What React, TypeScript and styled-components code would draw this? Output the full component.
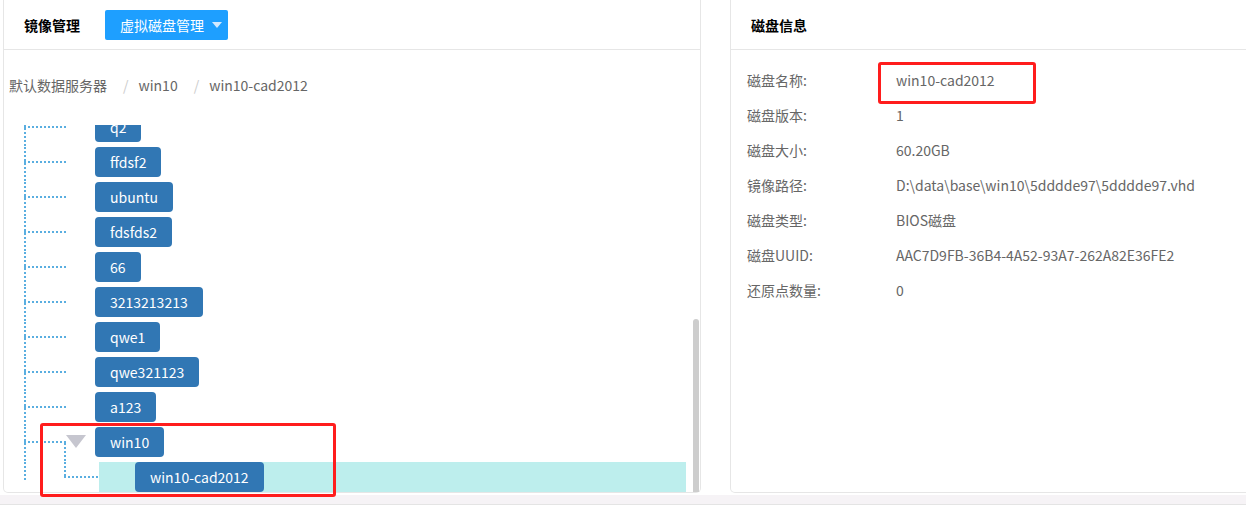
import React from 'react';
import styled, { createGlobalStyle } from 'styled-components';

const GlobalStyle = createGlobalStyle`
  html, body {
    margin: 0;
    padding: 0;
    background: #fff;
    overflow: hidden;
  }
  body {
    font-family: "Microsoft YaHei", "Noto Sans CJK SC", sans-serif;
    font-size: 14px;
    color: #666;
  }
`;

// x, y, w, h of one dotted guide segment inside a connector cell
type Seg = [number, number, number, number];

const DOT = '#5aaee0';
const dots = ([x, y, w, h]: Seg) => {
  const dir = w > h ? 'to right' : 'to bottom';
  return `repeating-linear-gradient(${dir}, ${DOT} 0 2px, transparent 2px 4px) ${x}px ${y}px / ${w}px ${h}px no-repeat`;
};

const Page = styled.div`
  display: flex;
  flex-direction: column;
  width: 1246px;
  height: 517px;
`;

const Panels = styled.div`
  display: flex;
  padding-left: 3px;
  height: 493px;
`;

const Panel = styled.section<{ $width: number }>`
  position: relative;
  flex: none;
  display: flex;
  flex-direction: column;
  width: ${p => p.$width}px;
  height: 100%;
  box-sizing: border-box;
  border: 1px solid #e6e6e6;
  border-top: none;
  border-radius: 0 0 5px 5px;
  background: #fff;

  & + & {
    margin-left: 29px;
  }
`;

const PanelHeader = styled.header`
  flex: none;
  display: flex;
  align-items: center;
  height: 49px;
  padding-left: 20px;
  border-bottom: 1px solid #e6e6e6;
`;

const Title = styled.h2`
  margin: 0;
  font-size: 14px;
  font-weight: 700;
  color: #000;
`;

const DropButton = styled.button`
  display: inline-flex;
  align-items: center;
  gap: 8px;
  height: 30px;
  margin-left: 25px;
  padding: 0 6px 0 15px;
  border: none;
  border-radius: 2px;
  background: #1e9fff;
  color: #fff;
  font: inherit;
  font-size: 14px;
`;

const Caret = styled.i`
  width: 0;
  height: 0;
  border-left: 5.5px solid transparent;
  border-right: 5.5px solid transparent;
  border-top: 6px solid #d2e9ff;
`;

const Breadcrumb = styled.nav`
  flex: none;
  display: flex;
  align-items: center;
  height: 75px;
  padding: 0 0 5px 5px;
  box-sizing: border-box;
  color: #666;
`;

const Crumb = styled.span``;

const Sep = styled.span`
  margin: 0 10px 0 16px;
  color: #ccc;
`;

const TreeArea = styled.div`
  position: relative;
  flex: 1;
  overflow: hidden;
`;

const TreeList = styled.ul`
  list-style: none;
  margin: -13px 0 0;
  padding: 0 0 0 20px;
`;

const Row = styled.li`
  display: flex;
  align-items: flex-start;
  height: 35px;
`;

const Connector = styled.span<{ $w: number; $segs: Seg[] }>`
  flex: none;
  width: ${p => p.$w}px;
  height: 35px;
  background: ${p => p.$segs.map(dots).join(', ')};
`;

const Toggle = styled.span`
  flex: none;
  width: 29px;
  height: 30px;
`;

const Triangle = styled.i`
  display: block;
  width: 0;
  height: 0;
  margin-top: 8px;
  border-left: 10.5px solid transparent;
  border-right: 10.5px solid transparent;
  border-top: 13px solid #c6c6cf;
`;

const NodeBox = styled.span`
  flex: none;
  height: 30px;
  line-height: 30px;
  padding: 0 15px;
  border-radius: 4px;
  background: #3177b4;
  color: #fff;
  white-space: nowrap;
`;

const Selected = styled.div`
  flex: none;
  display: flex;
  width: 587px;
  height: 30px;
  padding-left: 36px;
  box-sizing: border-box;
  background: #bdeeed;
`;

const Thumb = styled.div`
  position: absolute;
  right: 1px;
  top: 194px;
  bottom: 0;
  width: 6px;
  border-radius: 3px 3px 0 0;
  background: #cdcdcd;
`;

const Annotation = styled.span<{ $l: number; $t: number; $w: number; $h: number }>`
  position: absolute;
  left: ${p => p.$l}px;
  top: ${p => p.$t}px;
  width: ${p => p.$w}px;
  height: ${p => p.$h}px;
  box-sizing: border-box;
  border: 3px solid #ff1d1d;
  border-radius: 3px;
  pointer-events: none;
`;

const InfoList = styled.dl`
  margin: 0;
  padding: 12px 0 0 16px;
`;

const InfoRow = styled.div`
  display: grid;
  grid-template-columns: 149px 1fr;
  height: 35px;
`;

const Label = styled.dt`
  display: flex;
  align-items: center;
  color: #666;
`;

const Value = styled.dd`
  position: relative;
  display: flex;
  align-items: center;
  margin: 0;
  color: #666;
  white-space: nowrap;
`;

const Strip = styled.div`
  height: 9px;
  margin-top: 2px;
  background: #f6f3f6;
  border-bottom: 1px solid #e4e4e4;
`;

const rootNodes = ['q2', 'ffdsf2', 'ubuntu', 'fdsfds2', '66', '3213213213', 'qwe1', 'qwe321123', 'a123'];

const rootSegs: Seg[] = [[0, 0, 2, 35], [0, 14, 42, 2]];

const info: [string, string][] = [
  ['磁盘名称:', 'win10-cad2012'],
  ['磁盘版本:', '1'],
  ['磁盘大小:', '60.20GB'],
  ['镜像路径:', 'D:\\data\\base\\win10\\5dddde97\\5dddde97.vhd'],
  ['磁盘类型:', 'BIOS磁盘'],
  ['磁盘UUID:', 'AAC7D9FB-36B4-4A52-93A7-262A82E36FE2'],
  ['还原点数量:', '0'],
];

const App: React.FC = () => {
  return (
    <Page>
      <GlobalStyle />
      <Panels>
        <Panel $width={698}>
          <PanelHeader>
            <Title>镜像管理</Title>
            <DropButton>
              虚拟磁盘管理
              <Caret />
            </DropButton>
          </PanelHeader>
          <Breadcrumb>
            <Crumb>默认数据服务器</Crumb>
            <Sep>/</Sep>
            <Crumb>win10</Crumb>
            <Sep>/</Sep>
            <Crumb>win10-cad2012</Crumb>
          </Breadcrumb>
          <TreeArea>
            <TreeList>
              {rootNodes.map(name => (
                <Row key={name}>
                  <Connector $w={42} $segs={rootSegs} />
                  <Toggle />
                  <NodeBox>{name}</NodeBox>
                </Row>
              ))}
              <Row>
                <Connector $w={42} $segs={[...rootSegs, [40, 16, 2, 19]]} />
                <Toggle>
                  <Triangle />
                </Toggle>
                <NodeBox>win10</NodeBox>
              </Row>
              <Row>
                <Connector $w={75} $segs={[[0, 0, 2, 20], [40, 0, 2, 16], [40, 14, 35, 2]]} />
                <Selected>
                  <NodeBox>win10-cad2012</NodeBox>
                </Selected>
              </Row>
            </TreeList>
            <Thumb />
          </TreeArea>
          <Annotation $l={36} $t={423} $w={296} $h={74} />
        </Panel>

        <Panel $width={540}>
          <PanelHeader>
            <Title>磁盘信息</Title>
          </PanelHeader>
          <InfoList>
            {info.map(([label, value], i) => (
              <InfoRow key={label}>
                <Label>{label}</Label>
                <Value>
                  {value}
                  {i === 0 && <Annotation $l={-18} $t={0} $w={158} $h={42} />}
                </Value>
              </InfoRow>
            ))}
          </InfoList>
        </Panel>
      </Panels>
      <Strip />
    </Page>
  );
};

export default App;
